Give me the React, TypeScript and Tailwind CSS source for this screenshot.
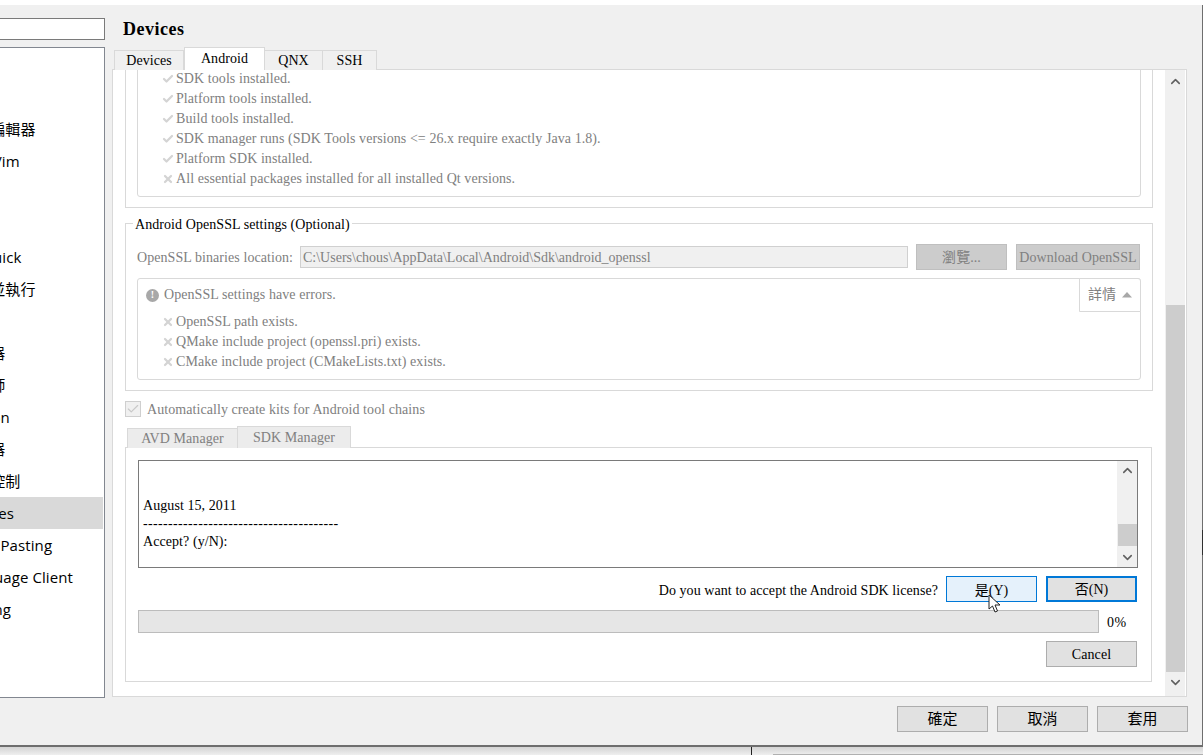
import React from "react";
import { Check, X, ChevronUp, ChevronDown } from "lucide-react";

const serif = "font-['Liberation_Serif','Noto_Sans_CJK_TC',serif]";

const sideItems = [
  "Kits", "環境", "文字編輯器", "FakeVim", "說明", "C++", "Qt Quick", "建置並執行",
  "Qbs", "除錯器", "設計師", "Python", "分析器", "版本控制", "Devices", "Code Pasting",
  "Language Client", "Testing",
];

function StatusRow({ ok, text }: { ok: boolean; text: string }) {
  return (
    <div className="flex h-5 items-center">
      <span className="flex w-[14px] items-center">
        {ok ? (
          <Check size={12} strokeWidth={4.5} className="text-[#d4d4d4]" />
        ) : (
          <X size={12} strokeWidth={4.5} className="text-[#d4d4d4]" />
        )}
      </span>
      <span className="whitespace-pre text-[#808080]">{text}</span>
    </div>
  );
}

function Btn({ children, className = "" }: { children: React.ReactNode; className?: string }) {
  return (
    <div className={`flex h-[26px] w-[91px] items-center justify-center border border-[#adadad] bg-[#e1e1e1] text-black ${className}`}>
      {children}
    </div>
  );
}

export default function App() {
  return (
    <div className={`flex h-[755px] w-[1203px] flex-col overflow-hidden bg-white text-[14px] leading-5 tracking-[0.07px] text-black ${serif}`}>
      <div className="h-[5px] shrink-0 bg-white" />
      {/* dialog */}
      <div className="relative flex h-[742px] shrink-0 border-b-2 border-r border-[#6e6e6e] bg-[#f0f0f0]">
        <div className="absolute right-[-1px] top-[525px] h-[25px] w-px bg-[#303030]" />
        {/* left column */}
        <div className="flex w-[105px] shrink-0 flex-col pt-[13px]">
          <div className="h-[22px] border border-l-0 border-[#7a7a7a] bg-white" />
          <div className="mt-[7px] h-[651px] overflow-hidden border border-l-0 border-[#828790] bg-white pr-px font-['Open_Sans','Noto_Sans_CJK_TC',sans-serif] text-[15px] tracking-[0.1px]">
            <div className="h-px" />
            {sideItems.map((s) => (
              <div key={s} className={`flex h-8 items-center whitespace-nowrap pl-0 ${s === "Devices" ? "bg-[#d9d9d9]" : ""}`}>
                <span className="ml-[-40px]">{s}</span>
              </div>
            ))}
          </div>
        </div>
        {/* right column */}
        <div className="flex w-[1097px] shrink-0 flex-col pl-[7px]">
          <div className="flex h-[42px] shrink-0 items-end pl-[11px] pb-[6px] text-[18px] font-bold leading-6 tracking-[0.5px]">
            Devices
          </div>
          {/* top tabs */}
          <div className="z-10 flex h-[23px] shrink-0 items-end pl-[2px]">
            <div className="flex h-[20px] w-[70px] items-center justify-center border border-b-0 border-[#d9d9d9] bg-[#f0f0f0]">Devices</div>
            <div className="flex h-[23px] w-[81px] items-center justify-center border border-b-0 border-[#d9d9d9] bg-white">Android</div>
            <div className="flex h-[20px] w-[58px] items-center justify-center border-r border-t border-[#d9d9d9] bg-[#f0f0f0]">QNX</div>
            <div className="flex h-[20px] w-[54px] items-center justify-center border-r border-t border-[#d9d9d9] bg-[#f0f0f0]">SSH</div>
          </div>
          {/* panel */}
          <div className="mt-[-1px] flex h-[628px] w-[1075px] shrink-0 overflow-hidden border border-[#d9d9d9] bg-white">
            <div className="flex w-[1052px] shrink-0 flex-col pl-3 pr-3">
              {/* top group */}
              <div className="mt-[-20px] h-[158px] shrink-0 border border-[#d9d9d9] px-[11px]">
                <div className="mt-px h-[145px] rounded-b-[3px] border border-[#d9d9d9] pl-6 pt-4">
                  <StatusRow ok text="SDK tools installed." />
                  <StatusRow ok text="Platform tools installed." />
                  <StatusRow ok text="Build tools installed." />
                  <StatusRow ok text="SDK manager runs (SDK Tools versions <= 26.x require exactly Java 1.8)." />
                  <StatusRow ok text="Platform SDK installed." />
                  <StatusRow ok={false} text="All essential packages installed for all installed Qt versions." />
                </div>
              </div>
              {/* OpenSSL group */}
              <div className="relative mt-[15px] h-[168px] shrink-0 border border-[#d9d9d9] px-[11px]">
                <div className="absolute left-[7px] top-[-9px] bg-white px-[2px] leading-5">Android OpenSSL settings (Optional)</div>
                <div className="mt-[20px] flex h-[26px] items-center text-[#808080]">
                  <span className="w-[163px] whitespace-nowrap pt-[2px]">OpenSSL binaries location:</span>
                  <div className="flex h-[22px] w-[608px] items-center whitespace-nowrap border border-[#d0d0d0] bg-[#f0f0f0] px-[2px] pt-[2px] tracking-normal">
                    C:\Users\chous\AppData\Local\Android\Sdk\android_openssl
                  </div>
                  <div className="ml-2 flex h-[26px] w-[91px] items-center justify-center border border-[#bfbfbf] bg-[#cccccc] pt-[2px]">瀏覽...</div>
                  <div className="ml-[9px] flex h-[26px] w-[124px] items-center justify-center whitespace-nowrap border border-[#bfbfbf] bg-[#cccccc] pt-[2px]">Download OpenSSL</div>
                </div>
                <div className="relative mt-2 h-[102px] rounded-[3px] border border-[#d9d9d9] pl-6 pt-[6px] text-[#808080]">
                  <div className="ml-[-16px] flex h-5 items-center">
                    <span className="mr-[5px] flex h-[13px] w-[13px] items-center justify-center rounded-full bg-[#a8a8a8] text-[10px] font-bold leading-none text-white">!</span>
                    OpenSSL settings have errors.
                  </div>
                  <div className="mt-[7px]">
                    <StatusRow ok={false} text="OpenSSL path exists." />
                    <StatusRow ok={false} text="QMake include project (openssl.pri) exists." />
                    <StatusRow ok={false} text="CMake include project (CMakeLists.txt) exists." />
                  </div>
                  <div className="absolute right-[-1px] top-[-1px] flex h-[34px] w-[62px] items-center justify-center gap-[6px] rounded-tr-[3px] border border-[#d9d9d9] bg-white text-[14px]">
                    詳情
                    <svg width="10" height="6" viewBox="0 0 10 6"><path d="M5 0 L10 5.5 L0 5.5 Z" fill="#a8a8a8" /></svg>
                  </div>
                </div>
              </div>
              {/* checkbox */}
              <div className="mt-[9px] flex h-[17px] shrink-0 items-center text-[#808080]">
                <span className="flex h-4 w-4 items-center justify-center border border-[#cfcfcf] bg-[#f0f0f0]">
                  <Check size={14} strokeWidth={2} className="text-[#c8c8c8]" />
                </span>
                <span className="ml-[6px] pt-[2px]">Automatically create kits for Android tool chains</span>
              </div>
              {/* bottom tabs */}
              <div className="z-10 mt-2 flex h-[23px] shrink-0 items-end pl-[2px] text-[#808080]">
                <div className="flex h-[20px] w-[110px] items-center justify-center border-l border-t border-[#d9d9d9] bg-[#ececec]">AVD Manager</div>
                <div className="flex h-[22px] w-[114px] items-center justify-center border-r border-t border-l border-[#d9d9d9] bg-[#ececec]">SDK Manager</div>
              </div>
              {/* SDK panel */}
              <div className="mt-[-1px] flex h-[235px] w-[1027px] shrink-0 flex-col border border-[#d9d9d9] pl-3 pr-[13px] pt-3">
                <div className="flex h-[108px] shrink-0 border border-[#7a7a7a] bg-white">
                  <div className="flex flex-1 flex-col justify-end pb-4 pl-1 text-[14px] leading-[18px] text-black">
                    <div>August 15, 2011</div>
                    <div className="tracking-[0.35px]">---------------------------------------</div>
                    <div>Accept? (y/N):</div>
                  </div>
                  <div className="flex w-[20px] flex-col items-center justify-between bg-[#f0f0f0] py-[2px]">
                    <ChevronUp size={15} strokeWidth={2.5} className="text-[#606060]" />
                    <div className="mt-[42px] h-[22px] w-[19px] bg-[#cdcdcd]" />
                    <ChevronDown size={15} strokeWidth={2.5} className="text-[#606060]" />
                  </div>
                </div>
                <div className="mt-2 flex h-[26px] shrink-0 items-center justify-end pr-px">
                  <span className="mr-2 pt-[4px]">Do you want to accept the Android SDK license?</span>
                  <div className="relative flex h-[26px] w-[91px] items-center justify-center border border-[#0078d7] bg-[#e5f1fb] pt-[3px]">
                    是(Y)
                    <svg className="absolute left-[41px] top-[17px]" width="14" height="20" viewBox="0 0 14 20">
                      <path d="M1 1 L1 15 L4.5 12 L7 18 L9.5 17 L7 11 L12 11 Z" fill="#ffffff" stroke="#222" strokeWidth="1" />
                    </svg>
                  </div>
                  <div className="ml-[9px] flex h-[26px] w-[91px] items-center justify-center border-2 border-[#0078d7] bg-[#e1e1e1] pt-[2px]">否(N)</div>
                </div>
                <div className="mt-2 flex h-[23px] shrink-0 items-center">
                  <div className="h-[23px] w-[961px] border border-[#bcbcbc] bg-[#e6e6e6]" />
                  <span className="ml-2 pt-[2px] tracking-[0.4px]">0%</span>
                </div>
                <div className="mt-2 flex justify-end pr-px">
                  <Btn className="pt-[2px]">Cancel</Btn>
                </div>
              </div>
            </div>
            {/* main scrollbar */}
            <div className="mt-0 flex w-5 shrink-0 flex-col items-center bg-[#f0f0f0] pb-[3px]">
              <div className="flex h-[235px] w-full items-start justify-center bg-[#f0f0f0] pt-1">
                <ChevronUp size={15} strokeWidth={2.5} className="text-[#606060]" />
              </div>
              <div className="h-[367px] w-[19px] bg-[#cdcdcd]" />
              <div className="flex flex-1 items-center justify-center">
                <ChevronDown size={15} strokeWidth={2.5} className="text-[#606060]" />
              </div>
            </div>
          </div>
          {/* dialog buttons */}
          <div className="mt-[9px] flex w-[1076px] shrink-0 justify-end gap-[9px] text-[15px]">
            <Btn>確定</Btn>
            <Btn>取消</Btn>
            <Btn>套用</Btn>
          </div>
        </div>
      </div>
      {/* below the dialog */}
      <div className="relative flex-1 bg-gradient-to-b from-[#d4d4d4] to-[#efefef]">
        <div className="absolute left-[751px] top-0 h-full w-px bg-[#222222]" />
        <div className="absolute bottom-0 left-[773px] right-0 h-px bg-[#b0b0b0]" />
      </div>
    </div>
  );
}
